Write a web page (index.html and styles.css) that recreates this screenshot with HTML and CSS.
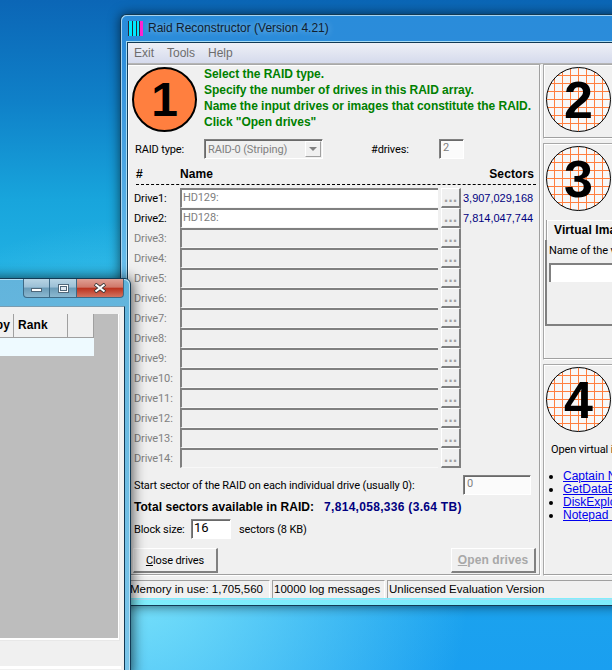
FILE: index.html
```html
<!DOCTYPE html>
<html lang="en">
<head>
  <meta charset="UTF-8" />
  <title>Raid Reconstructor</title>
  <link rel="stylesheet" href="styles.css">
</head>
<body>

<div class="desktop">

  <div class="window main-window">
    <div class="titlebar">
      <svg class="app-icon" width="15" height="15" viewBox="0 0 15 15">
        <rect width="15" height="15" fill="#2a2a3a"/>
        <rect x="1" width="3" height="15" fill="#00e8ff"/>
        <rect x="5" width="3" height="15" fill="#00e8ff"/>
        <rect x="9" width="2" height="15" fill="#00e8ff"/>
        <rect x="12" width="3" height="15" fill="#ff20d0"/>
      </svg>
      <span class="title">Raid Reconstructor (Version 4.21)</span>
    </div>

    <div class="inner">
      <div class="menubar">
        <span>Exit</span>
        <span>Tools</span>
        <span>Help</span>
      </div>

      <div class="client">
        <div class="panel step-one">
          <div class="intro">
            <div class="badge badge-solid">1</div>
            <div class="steps">
              <p>Select the RAID type.</p>
              <p>Specify the number of drives in this RAID array.</p>
              <p>Name the input drives or images that constitute the RAID.</p>
              <p>Click "Open drives"</p>
            </div>
          </div>

          <div class="raid-row">
            <label class="raid-label">RAID type:</label>
            <div class="select">
              <span>RAID-0 (Striping)</span>
              <div class="select-arrow"></div>
            </div>
            <label class="count-label">#drives:</label>
            <input class="field count-input" type="text" value="2" disabled>
          </div>

          <div class="table-head">
            <span class="col-num">#</span>
            <span class="col-name">Name</span>
            <span class="col-sectors">Sectors</span>
          </div>

          <div class="drives" id="drives"></div>

          <div class="start-row">
            <span>Start sector of the RAID on each individual drive (usually 0):</span>
            <input class="field start-input" type="text" value="0" disabled>
          </div>

          <div class="total-row">
            <b>Total sectors available in RAID:</b>
            <b class="total-value">7,814,058,336 (3.64 TB)</b>
          </div>

          <div class="block-row">
            <span class="block-label">Block size:</span>
            <input class="field block-input" type="text" value="16">
            <span>sectors (8 KB)</span>
          </div>

          <div class="button-row">
            <button class="btn"><u>C</u>lose drives</button>
            <button class="btn btn-disabled"><u>O</u>pen drives</button>
          </div>
        </div>

        <div class="side">
          <div class="panel step-two">
            <div class="badge badge-grid">2</div>
          </div>

          <div class="panel step-three">
            <div class="badge badge-grid">3</div>
            <div class="tab">Virtual Image</div>
            <div class="tab-body">
              <p>Name of the virtual image</p>
              <div class="image-input"></div>
            </div>
          </div>

          <div class="panel step-four">
            <div class="badge badge-grid">4</div>
            <p class="open-text">Open virtual image with</p>
            <ul class="links">
              <li><a href="#">Captain Nemo</a></li>
              <li><a href="#">GetDataBack</a></li>
              <li><a href="#">DiskExplorer</a></li>
              <li><a href="#">Notepad (raw)</a></li>
            </ul>
          </div>
        </div>
      </div>

      <div class="statusbar">
        <div class="status status-memory">Memory in use: 1,705,560</div>
        <div class="status status-log">10000 log messages</div>
        <div class="status status-license">Unlicensed Evaluation Version</div>
      </div>
    </div>
  </div>

  <div class="window back-window">
    <div class="controls">
      <div class="ctl ctl-min"><i></i></div>
      <div class="ctl ctl-max"><i></i></div>
      <div class="ctl ctl-close">
        <svg width="14" height="10" viewBox="0 0 14 10">
          <path d="M2 1 L12 9 M12 1 L2 9" stroke="#333" stroke-width="3.6"/>
          <path d="M2.5 1.5 L11.5 8.5 M11.5 1.5 L2.5 8.5" stroke="#fff" stroke-width="2.2"/>
        </svg>
      </div>
    </div>
    <div class="back-client">
      <div class="list">
        <div class="list-head">
          <div class="head-cell head-py">py</div>
          <div class="head-cell head-rank">Rank</div>
          <div class="head-cell head-empty"></div>
        </div>
        <div class="list-row"></div>
      </div>
      <div class="back-bottom"></div>
    </div>
  </div>

</div>

<script>
  const drives = [
    { name: 'HD129:', sectors: '3,907,029,168' },
    { name: 'HD128:', sectors: '7,814,047,744' }
  ];

  const box = document.getElementById('drives');
  for (let i = 0; i < 14; i++) {
    const d = drives[i];
    const row = document.createElement('div');
    row.className = d ? 'drive' : 'drive off';
    row.innerHTML = `
      <span class="drive-label">Drive${i + 1}:</span>
      <div class="drive-name">${d ? d.name : ''}</div>
      <div class="dots">...</div>
      <span class="drive-sectors">${d ? d.sectors : ''}</span>`;
    box.appendChild(row);
  }
</script>

</body>
</html>
```

FILE: styles.css
```css
* { box-sizing: border-box; }

html, body {
  margin: 0; padding: 0;
  width: 612px; height: 670px;
  overflow: hidden;
}
body {
  font-family: Roboto, "Liberation Sans", sans-serif;
  font-size: 11px;
  letter-spacing: -0.13px;
  color: #000;
}
p { margin: 0; }

.desktop {
  position: relative;
  width: 612px; height: 670px;
  overflow: hidden;
  background:
    radial-gradient(ellipse 340px 350px at 130px 570px, rgba(130,232,252,0.95), rgba(130,232,252,0) 100%),
    linear-gradient(180deg, #0b66b6 0, #0f80c8 100px, #18a5dc 200px, #22b2e4 278px, #1a9ff0 670px);
}

.window { position: absolute; }

/* main window */
.main-window {
  left: 120px; top: 14px;
  width: 520px; height: 592px;
  border: 1px solid #123a55;
  border-right: 0;
  border-radius: 6px 0 0 4px;
  background: linear-gradient(180deg, #2a8cda 0%, #2b8cda 5%, #6cc0ec 45%, #74d4f4 90%, #7feefc 100%);
  box-shadow: inset 1px 1px 0 #a6d3ef, 0 0 12px rgba(0,0,0,0.6);
}
.titlebar {
  display: flex;
  align-items: center;
  height: 27px;
  padding: 0 0 1px 7px;
}
.app-icon { margin-right: 5px; }
.title {
  font-family: "Liberation Sans", sans-serif;
  font-size: 12px;
  letter-spacing: 0;
  color: #10202e;
  text-shadow: 0 0 6px rgba(255,255,255,0.55);
}
.inner {
  margin-left: 6px;
  border: 1px solid #123a55;
  border-right: 0;
  border-bottom: 1px solid #7feefc;
  box-shadow: 0 0 0 1px #a8dcf3;
  height: 557px;
  background: #f0f0f0;
}
.menubar {
  display: flex;
  gap: 13px;
  height: 20px;
  padding: 3px 0 0 6px;
  color: #6d6d6d;
  background: linear-gradient(180deg, #eef0f6 0%, #d5daec 100%);
  font-family: "Liberation Sans", sans-serif;
  font-size: 12px;
  letter-spacing: 0;
  line-height: 15px;
}
.client {
  display: flex;
  height: 513px;
  gap: 2px;
  border-top: 1px solid #b5b5b5;
}
.panel {
  border: 1px solid #a8a8a8;
  border-right-color: #fff;
  border-bottom-color: #fff;
  box-shadow: inset -1px -1px 0 #a0a0a0, inset 1px 1px 0 #fff;
}

/* step one */
.step-one {
  width: 413px;
  border-left: 0;
}
.intro {
  display: flex;
  height: 74px;
  padding: 2px 0 0 4px;
}
.steps { margin: -1px 0 0 7px; }
.steps p {
  font-family: "Liberation Sans", sans-serif;
  font-weight: bold;
  font-size: 12px;
  letter-spacing: -0.03px;
  line-height: 16px;
  white-space: nowrap;
  color: #008000;
}

.badge {
  flex: none;
  width: 65px; height: 65px;
  border-radius: 50%;
  border: 1px solid #000;
  display: flex;
  align-items: center;
  justify-content: center;
  font-family: "Liberation Sans", sans-serif;
  font-weight: bold;
  font-size: 48px;
  letter-spacing: 0;
  color: #000;
}
.badge-solid {
  background: #ff7f3f;
  border-width: 2px;
}
.badge-grid {
  background-color: #f8f8f8;
  background-image:
    linear-gradient(#ff7f3f 1px, transparent 1px),
    linear-gradient(90deg, #ff7f3f 1px, transparent 1px);
  background-size: 8px 8px;
  background-position: -1px -1px;
}

.raid-row {
  display: flex;
  align-items: center;
  height: 20px;
  padding-left: 7px;
}
.raid-label { width: 69px; }
.select {
  display: flex;
  justify-content: space-between;
  align-items: center;
  width: 119px; height: 20px;
  border: 1px solid #808080;
  border-right-color: #fff;
  border-bottom-color: #fff;
  box-shadow: inset 1px 1px 0 #696969;
  padding-left: 3px;
  color: #808080;
}
.select-arrow {
  position: relative;
  width: 16px; height: 16px;
  margin-right: 1px;
  background: #f0f0f0;
  border: 1px solid #a0a0a0;
  border-top-color: #fff;
  border-left-color: #fff;
}
.select-arrow::after {
  content: "";
  position: absolute;
  left: 3px; top: 5px;
  border: 4px solid transparent;
  border-top-color: #808080;
  border-bottom: 0;
}
.count-label { margin-left: 48px; width: 68px; }
.field {
  font-family: Roboto, sans-serif;
  font-size: 11px;
  border: 1px solid #808080;
  border-right-color: #fff;
  border-bottom-color: #fff;
  box-shadow: inset 1px 1px 0 #696969;
  background: #fff;
  color: #000;
  padding: 0 0 3px 3px;
  margin: 0;
  outline: none;
  border-radius: 0;
}
.field:disabled { color: #808080; background: #fbfbfb; }
.count-input { width: 25px; height: 20px; }

.table-head {
  display: flex;
  height: 19px;
  margin: 7px 4px 0 8px;
  padding: 1px 2px 0 0;
  font-family: "Liberation Sans", sans-serif;
  font-weight: bold;
  font-size: 12px;
  letter-spacing: 0.1px;
  border-bottom: 1px dashed #000;
}
.col-num { width: 44px; }
.col-sectors { margin-left: auto; }

.drives { padding: 3px 0 0 6px; }
.drive {
  display: flex;
  align-items: center;
  height: 20px;
}
.drive-label { width: 46px; }
.drive.off .drive-label { color: #808080; }
.drive-name {
  width: 258px; height: 20px;
  line-height: 16px;
  padding-left: 1px;
  color: #808080;
  background: #fff;
  border-top: 2px solid #808080;
  border-left: 2px solid #808080;
  border-bottom: 1px solid #f8f8f8;
}
.drive.off .drive-name { background: #f0f0f0; }
.dots {
  width: 20px; height: 20px;
  margin-left: 3px;
  background: #f0f0f0;
  border-top: 1px solid #fff;
  border-left: 1px solid #fff;
  border-right: 2px solid #808080;
  border-bottom: 2px solid #808080;
  color: #a0a0a0;
  font-family: "DejaVu Sans", sans-serif;
  font-weight: bold;
  font-size: 12px;
  letter-spacing: 0;
  line-height: 19px;
  text-align: center;
}
.drive-sectors {
  margin-left: 2px;
  color: #000080;
  font-family: "Liberation Sans", sans-serif;
  font-size: 11px;
  letter-spacing: -0.02px;
}

.start-row {
  display: flex;
  align-items: center;
  height: 20px;
  margin-top: 7px;
  padding-left: 6px;
}
.start-input { width: 68px; height: 20px; margin-left: auto; margin-right: 9px; }
.total-row {
  display: flex;
  align-items: center;
  gap: 10px;
  height: 24px;
  padding-left: 6px;
  font-family: "Liberation Sans", sans-serif;
  font-size: 12px;
  letter-spacing: 0.05px;
}
.total-value { color: #000080; letter-spacing: 0.3px; }
.block-row {
  display: flex;
  align-items: center;
  height: 20px;
  padding-left: 6px;
}
.block-label { width: 57px; }
.block-input { width: 40px; height: 20px; margin-right: 8px; font-size: 13px; padding-left: 2px; }
.button-row {
  display: flex;
  justify-content: space-between;
  margin-top: 9px;
  padding: 0 4px 0 5px;
}
.btn {
  width: 85px; height: 25px;
  padding: 0;
  font-family: Roboto, sans-serif;
  font-size: 11px;
  letter-spacing: -0.13px;
  color: #000;
  background: #f0f0f0;
  border: 0;
  border-top: 1px solid #fff;
  border-left: 1px solid #fff;
  border-right: 2px solid #808080;
  border-bottom: 2px solid #808080;
}
.btn-disabled {
  font-family: "Liberation Sans", sans-serif;
  font-weight: bold;
  font-size: 12px;
  letter-spacing: 0.1px;
  color: #a8a8a8;
}

/* right column */
.side {
  display: flex;
  flex-direction: column;
  gap: 4px;
  width: 90px;
  flex: none;
}
.side .panel { padding: 2px 0 0 2px; }
.side .badge { font-size: 52px; }
.step-two { height: 75px; }
.step-three { height: 217px; }
.tab {
  width: 80px; height: 20px;
  margin: 9px 0 0 1px;
  padding: 2px 0 0 6px;
  font-family: "Liberation Sans", sans-serif;
  font-weight: bold;
  font-size: 12px;
  letter-spacing: 0.1px;
  white-space: nowrap;
  border-top: 1px solid #fff;
  border-left: 1px solid #fff;
  box-shadow: -1px 0 0 #a0a0a0;
}
.tab-body {
  height: 86px;
  margin-left: -1px;
  border-left: 2px solid #808080;
  border-bottom: 2px solid #808080;
  padding: 4px 0 0 2px;
  white-space: nowrap;
  overflow: hidden;
}
.image-input {
  width: 100px; height: 19px;
  margin-top: 6px;
  background: #fff;
  border-top: 2px solid #808080;
  border-left: 2px solid #808080;
}
.step-four { height: 212px; }
.open-text { margin: 11px 0 0 5px; white-space: nowrap; }
.links {
  margin: 14px 0 0;
  padding: 0 0 0 17px;
  white-space: nowrap;
  font-family: "Liberation Sans", sans-serif;
  font-size: 12px;
  letter-spacing: 0;
}
.links li { height: 13px; line-height: 13px; }
.links a { color: #0000ee; }

/* status bar */
.statusbar {
  display: flex;
  gap: 2px;
  height: 22px;
  padding-top: 4px;
  font-family: "Liberation Sans", sans-serif;
  font-size: 11.5px;
  letter-spacing: 0;
}
.status {
  height: 18px;
  line-height: 16px;
  padding-left: 1px;
  border-left: 1px solid #a0a0a0;
  border-top: 1px solid #a0a0a0;
  border-right: 1px solid #fff;
  white-space: nowrap;
}
.status-memory { width: 142px; border-left: 0; padding-left: 2px; }
.status-log { width: 113px; }
.status-license { flex: 1; }

/* window behind, cut off on the left */
.back-window {
  left: -40px; top: 278px;
  width: 171px; height: 400px;
  border: 1px solid #123a55;
  border-radius: 6px 6px 0 0;
  background: linear-gradient(180deg, #62b4dc 0%, #7cc6ea 100%);
  box-shadow: inset -1px 1px 0 #b6e0f5, 1px 0 14px rgba(0,0,0,0.7);
}
.controls {
  position: absolute;
  right: 6px; top: 0;
  display: flex;
  height: 19px;
}
.ctl {
  display: flex;
  align-items: center;
  justify-content: center;
  height: 19px;
  border: 1px solid #3d6a86;
  border-top: 0;
  border-left: 0;
}
.ctl-min, .ctl-max {
  width: 27px;
  background: linear-gradient(180deg, #b7d4e4 0%, #9cc0d6 45%, #6b9cb8 50%, #8bb8d0 100%);
}
.ctl-min {
  border-left: 1px solid #3d6a86;
  border-radius: 0 0 0 4px;
}
.ctl-min i {
  width: 11px; height: 4px;
  margin-top: 4px;
  background: #fff;
  border: 1px solid #50687a;
}
.ctl-max i {
  width: 11px; height: 9px;
  background: #dfe8f0;
  border: 2px solid #fff;
  outline: 1px solid #50687a;
  outline-offset: -1px;
  box-shadow: inset 0 0 0 1px #50687a;
}
.ctl-close {
  width: 47px;
  border-radius: 0 0 4px 0;
  background: linear-gradient(180deg, #e0a094 0%, #d0786a 45%, #bc3420 52%, #d27460 100%);
}
.back-client {
  position: absolute;
  left: 5px; top: 27px;
  width: 159px; height: 372px;
  background: #f0f0f0;
  border: 1px solid #123a55;
  border-bottom: 0;
  border-top-color: #7a9cb0;
}
.list {
  height: 326px;
  margin: 7px 5px 0 0;
  background: #bdbdbd;
  border-right: 1px solid #fff;
  border-bottom: 2px solid #fff;
  box-shadow: 1px 1px 0 #e8e8e8;
}
.list-head {
  display: flex;
  height: 24px;
}
.head-cell {
  height: 24px;
  background: #f0f0f0;
  border-right: 1px solid #a0a0a0;
  border-bottom: 1px solid #a0a0a0;
  font-family: "Liberation Sans", sans-serif;
  font-weight: bold;
  font-size: 12px;
  letter-spacing: 0.1px;
  line-height: 22px;
  padding-left: 4px;
}
.head-py { width: 47px; text-align: right; padding-right: 3px; }
.head-rank { width: 54px; }
.head-empty { width: 26px; }
.list-row {
  width: 127px; height: 18px;
  background: #eefaff;
}
.back-bottom {
  position: absolute;
  left: 0; top: 359px;
  width: 154px; height: 3px;
  background: #fff;
}
```
